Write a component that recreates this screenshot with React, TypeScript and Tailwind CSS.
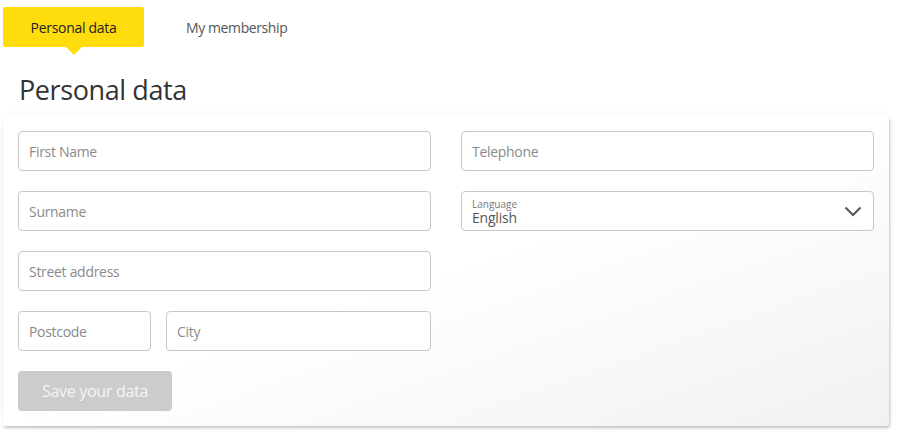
import React from "react";

const font = { fontFamily: '"Open Sans", "Noto Sans", sans-serif' };

function Field({ label, className = "" }: { label: string; className?: string }) {
  return (
    <div
      className={`h-10 rounded border border-[#c8c8c8] bg-white flex items-center px-[10px] text-[14px] text-[#8a8a8a] tracking-[-0.3px] ${className}`}
    >
      {label}
    </div>
  );
}

export default function App() {
  return (
    <div className="w-[908px] h-[434px] bg-white overflow-hidden" style={font}>
      {/* tabs */}
      <div className="flex items-start pt-[7px] pl-[3px]">
        <div className="relative w-[141px] h-10 rounded-[2px] bg-[#ffdc0c] flex items-center justify-center text-[14px] text-[#222] tracking-[-0.3px]">
          Personal data
          <div className="absolute left-1/2 -bottom-[8px] -translate-x-1/2 w-0 h-0 border-l-[8px] border-r-[8px] border-t-[8px] border-l-transparent border-r-transparent border-t-[#ffdc0c]" />
        </div>
        <div className="h-10 flex items-center ml-[42px] text-[14px] text-[#555] tracking-[-0.4px]">
          My membership
        </div>
      </div>

      <h1 className="mt-[26px] ml-[19px] text-[27px] leading-[34px] text-[#333] tracking-[-0.4px]">
        Personal data
      </h1>

      {/* card */}
      <div className="mt-[9px] ml-[3px] w-[886px] rounded-[3px] bg-gradient-to-br from-white via-white to-[#f1f1f1] shadow-[1px_2px_3px_rgba(0,0,0,0.22),0_0_10px_rgba(0,0,0,0.04)] p-[15px] grid grid-cols-2 gap-x-[30px]">
        <div className="flex flex-col gap-5">
          <Field label="First Name" />
          <Field label="Surname" />
          <Field label="Street address" />
          <div className="flex gap-[15px]">
            <Field label="Postcode" className="w-[133px]" />
            <Field label="City" className="flex-1" />
          </div>
          <button className="w-[154px] h-10 rounded bg-[#cccccc] text-[#f4f4f4] text-[16px] tracking-[-0.3px]">
            Save your data
          </button>
        </div>
        <div className="flex flex-col gap-5">
          <Field label="Telephone" />
          <div className="h-10 rounded border border-[#c8c8c8] bg-white flex items-center px-[10px]">
            <div className="flex-1 flex flex-col pt-[2px]">
              <span className="text-[10px] leading-[12px] text-[#777]">Language</span>
              <span className="text-[14px] leading-[16px] text-[#555] tracking-[-0.2px]">English</span>
            </div>
            <svg width="18" height="11" viewBox="0 0 18 11" className="mr-[1px]">
              <path d="M1.5 1.5 L9 9 L16.5 1.5" fill="none" stroke="#555" strokeWidth="2" />
            </svg>
          </div>
        </div>
      </div>
    </div>
  );
}
